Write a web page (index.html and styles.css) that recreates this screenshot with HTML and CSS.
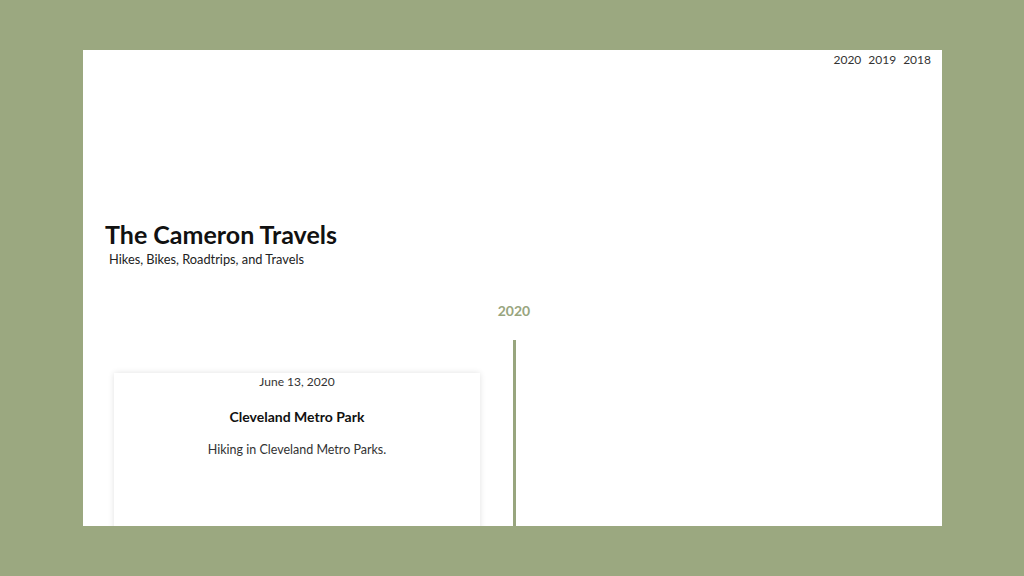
FILE: index.html
```html
<!DOCTYPE html>
<html>
<head>
<meta charset="utf-8">
<link rel="stylesheet" href="styles.css">
</head>
<body>
<div class="page">
  <nav class="years">
    <a>2020</a><a>2019</a><a>2018</a>
  </nav>
  <header class="hero">
    <h1>The Cameron Travels</h1>
    <p>Hikes, Bikes, Roadtrips, and Travels</p>
  </header>
  <section class="timeline">
    <h2>2020</h2>
    <div class="track">
      <div class="col left">
        <article class="card">
          <div class="date">June 13, 2020</div>
          <h3>Cleveland Metro Park</h3>
          <p>Hiking in Cleveland Metro Parks.</p>
        </article>
      </div>
      <div class="line"></div>
      <div class="col right"></div>
    </div>
  </section>
</div>
</body>
</html>
```
FILE: styles.css
```css
html, body { margin: 0; padding: 0; }
body {
  background: #9ba880;
  width: 1024px;
  height: 576px;
  overflow: hidden;
  font-family: Lato, "Noto Sans", sans-serif;
  color: #222;
  padding: 50px 82px 0 83px;
  box-sizing: border-box;
}
.page {
  background: #fff;
  height: 476px;
  overflow: hidden;
  display: flex;
  flex-direction: column;
}
.years {
  display: flex;
  justify-content: flex-end;
  gap: 7px;
  padding: 2px 11px 0 0;
  font-size: 12px;
  color: #333;
  line-height: 16px;
}
.hero {
  padding: 151px 0 0 22px;
}
.hero h1 {
  margin: 0;
  font-size: 25px;
  font-weight: 700;
  color: #111;
  line-height: 30px;
}
.hero p {
  margin: 2px 0 0 4px;
  font-size: 12.8px;
  color: #222;
  line-height: 16px;
}
.timeline h2 {
  margin: 35px 0 0 0;
  text-align: center;
  font-size: 14px;
  font-weight: 700;
  color: #98a57e;
  line-height: 18px;
  padding-left: 3px;
}
.track {
  display: grid;
  grid-template-columns: 430px 3px 1fr;
  margin-top: 20px;
  height: 300px;
}
.col.left { padding: 33px 33px 0 31px; }
.line {
  background: #98a57e;
}
.card {
  background: #fff;
  box-shadow: 0 0 6px rgba(0,0,0,0.12);
  height: 220px;
  text-align: center;
  padding-top: 1px;
  box-sizing: border-box;
}
.date {
  font-size: 12px;
  color: #333;
  line-height: 16px;
}
.card h3 {
  margin: 18px 0 0;
  font-size: 14px;
  font-weight: 700;
  color: #111;
  line-height: 18px;
}
.card p {
  margin: 16px 0 0;
  font-size: 12.5px;
  color: #333;
  line-height: 16px;
}
```
